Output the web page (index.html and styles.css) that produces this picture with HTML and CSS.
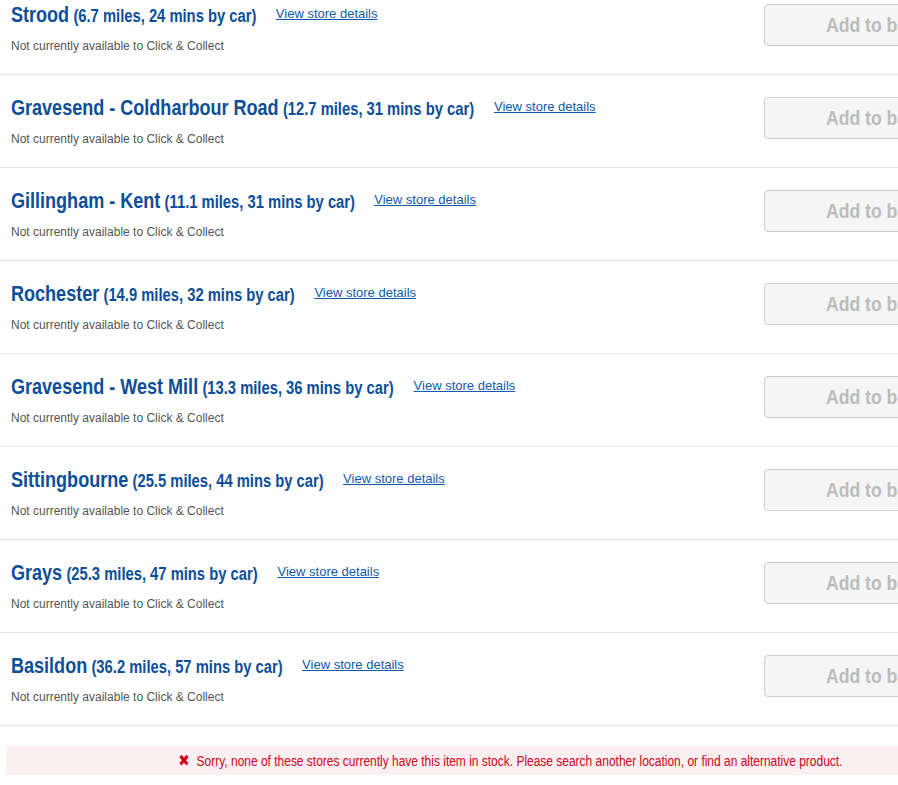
FILE: index.html
```html
<!DOCTYPE html>
<html lang="en">
<head>
  <meta charset="UTF-8" />
  <title>Store stock</title>
  <link rel="stylesheet" href="styles.css">
</head>
<body>

<div class="stores">
  <div class="store">
    <div class="store-info">
      <h3><span class="narrow"><span class="name">Strood</span> <span class="dist">(6.7 miles, 24 mins by car)</span><a href="#">View store details</a></span></h3>
      <p>Not currently available to Click &amp; Collect</p>
    </div>
    <button disabled><span class="narrow">Add to basket</span></button>
  </div>
  <div class="store">
    <div class="store-info">
      <h3><span class="narrow"><span class="name">Gravesend - Coldharbour Road</span> <span class="dist">(12.7 miles, 31 mins by car)</span><a href="#">View store details</a></span></h3>
      <p>Not currently available to Click &amp; Collect</p>
    </div>
    <button disabled><span class="narrow">Add to basket</span></button>
  </div>
  <div class="store">
    <div class="store-info">
      <h3><span class="narrow"><span class="name">Gillingham - Kent</span> <span class="dist">(11.1 miles, 31 mins by car)</span><a href="#">View store details</a></span></h3>
      <p>Not currently available to Click &amp; Collect</p>
    </div>
    <button disabled><span class="narrow">Add to basket</span></button>
  </div>
  <div class="store">
    <div class="store-info">
      <h3><span class="narrow"><span class="name">Rochester</span> <span class="dist">(14.9 miles, 32 mins by car)</span><a href="#">View store details</a></span></h3>
      <p>Not currently available to Click &amp; Collect</p>
    </div>
    <button disabled><span class="narrow">Add to basket</span></button>
  </div>
  <div class="store">
    <div class="store-info">
      <h3><span class="narrow"><span class="name">Gravesend - West Mill</span> <span class="dist">(13.3 miles, 36 mins by car)</span><a href="#">View store details</a></span></h3>
      <p>Not currently available to Click &amp; Collect</p>
    </div>
    <button disabled><span class="narrow">Add to basket</span></button>
  </div>
  <div class="store">
    <div class="store-info">
      <h3><span class="narrow"><span class="name">Sittingbourne</span> <span class="dist">(25.5 miles, 44 mins by car)</span><a href="#">View store details</a></span></h3>
      <p>Not currently available to Click &amp; Collect</p>
    </div>
    <button disabled><span class="narrow">Add to basket</span></button>
  </div>
  <div class="store">
    <div class="store-info">
      <h3><span class="narrow"><span class="name">Grays</span> <span class="dist">(25.3 miles, 47 mins by car)</span><a href="#">View store details</a></span></h3>
      <p>Not currently available to Click &amp; Collect</p>
    </div>
    <button disabled><span class="narrow">Add to basket</span></button>
  </div>
  <div class="store">
    <div class="store-info">
      <h3><span class="narrow"><span class="name">Basildon</span> <span class="dist">(36.2 miles, 57 mins by car)</span><a href="#">View store details</a></span></h3>
      <p>Not currently available to Click &amp; Collect</p>
    </div>
    <button disabled><span class="narrow">Add to basket</span></button>
  </div>
</div>

<div class="no-stock">
  <span class="narrow"><span class="cross">&#10006;</span>Sorry, none of these stores currently have this item in stock. Please search another location, or find an alternative product.</span>
</div>

</body>
</html>
```

FILE: styles.css
```css
html, body {
  overflow: hidden;
}
body {
  margin: 0;
  font-family: "Liberation Sans", Arial, sans-serif;
  background: #fff;
  width: 1020px;
}
/* no Arial Narrow here, so squeeze Arial-width text by hand */
.narrow {
  display: inline-block;
  transform: scaleX(0.82);
  transform-origin: left center;
  white-space: nowrap;
}
.stores {
  margin-top: -18px;
}
.store {
  display: flex;
  justify-content: space-between;
  align-items: flex-start;
  height: 92px;
  border-bottom: 1px solid #e5e5e5;
  padding-left: 11px;
}
.store-info {
  padding-top: 21px;
}
.store h3 {
  margin: 0;
  font-weight: bold;
  color: #0d4e98;
  line-height: 24px;
  white-space: nowrap;
}
.store .name {
  font-size: 22px;
}
.store .dist {
  font-size: 18px;
}
.store a {
  display: inline-block;
  transform: scaleX(1.2195);
  transform-origin: left center;
  font-weight: normal;
  font-size: 13px;
  line-height: 16px;
  color: #1259a7;
  margin-left: 24px;
  vertical-align: 4px;
}
.store p {
  margin: 10px 0 0;
  font-size: 12px;
  line-height: 16px;
  color: #555;
}
.store button {
  margin-top: 22px;
  width: 238px;
  height: 42px;
  margin-right: 18px;
  padding: 1px 0 0 61px;
  text-align: left;
  background: #f5f5f5;
  border: 1px solid #ccc;
  border-radius: 4px;
  font-family: "Liberation Sans", Arial, sans-serif;
  font-weight: bold;
  font-size: 20px;
  color: #bcbcbc;
}
.store button .narrow {
  transform: scaleX(0.88);
}
.no-stock {
  margin: 20px 0 0 6px;
  width: 1008px;
  height: 29px;
  line-height: 29px;
  background: #fdf0f2;
  color: #d0021b;
  font-size: 14px;
  text-align: center;
}
.no-stock .narrow {
  transform: scaleX(0.855);
  transform-origin: center;
}
.no-stock .cross {
  font-family: "DejaVu Sans", sans-serif;
  font-weight: bold;
  font-size: 16px;
  margin-right: 8px;
}
```
